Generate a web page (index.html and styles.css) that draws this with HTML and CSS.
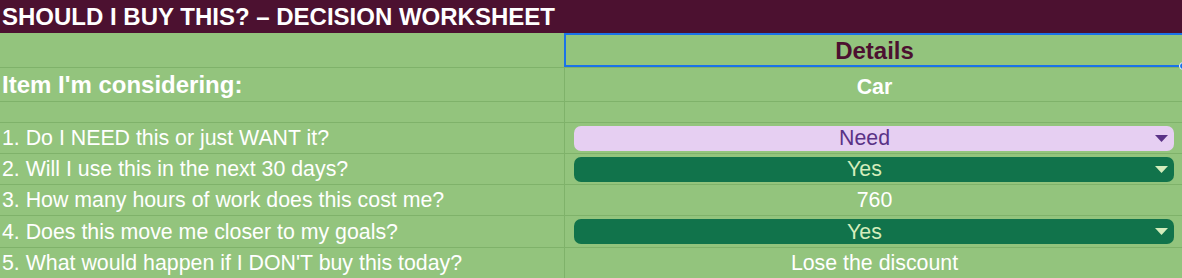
FILE: index.html
```html
<!DOCTYPE html>
<html lang="en">
<head>
<meta charset="utf-8">
<title>Should I buy this? – Decision worksheet</title>
<link rel="stylesheet" href="styles.css">
</head>
<body>
<div class="sheet">
  <div class="title">SHOULD I BUY THIS? – DECISION WORKSHEET</div>

  <div class="cell a"></div>
  <div class="cell b head">Details</div>

  <div class="cell a label-big">Item I'm considering:</div>
  <div class="cell b item">Car</div>

  <div class="cell a short"></div>
  <div class="cell b short"></div>

  <div class="cell a q">1. Do I NEED this or just WANT it?</div>
  <div class="cell b chip-cell">
    <div class="chip chip-need"><span class="chip-label">Need</span><svg class="arrow" width="13" height="7" viewBox="0 0 13 7"><polygon points="0,0 13,0 6.5,7"/></svg></div>
  </div>

  <div class="cell a q">2. Will I use this in the next 30 days?</div>
  <div class="cell b chip-cell">
    <div class="chip chip-yes"><span class="chip-label">Yes</span><svg class="arrow" width="13" height="7" viewBox="0 0 13 7"><polygon points="0,0 13,0 6.5,7"/></svg></div>
  </div>

  <div class="cell a q">3. How many hours of work does this cost me?</div>
  <div class="cell b val">760</div>

  <div class="cell a q tall">4. Does this move me closer to my goals?</div>
  <div class="cell b chip-cell tall">
    <div class="chip chip-yes"><span class="chip-label">Yes</span><svg class="arrow" width="13" height="7" viewBox="0 0 13 7"><polygon points="0,0 13,0 6.5,7"/></svg></div>
  </div>

  <div class="cell a q">5. What would happen if I DON'T buy this today?</div>
  <div class="cell b val">Lose the discount</div>

  <div class="selection"><span class="handle"></span></div>
</div>
</body>
</html>
```

FILE: styles.css
```css
html, body {
  margin: 0;
  padding: 0;
  background: #93c47d;
}
body {
  width: 1182px;
  height: 278px;
  overflow: hidden;
  font-family: "Liberation Sans", Arial, sans-serif;
  color: #ffffff;
}
.sheet {
  position: relative;
  display: grid;
  grid-template-columns: 565px 619px;
  grid-template-rows: 33px 35px 34px 21px 31px 31px 31px 32px 31px;
  width: 1184px;
  background: #93c47d;
}
.title {
  grid-column: 1 / 3;
  background: #4c1130;
  color: #ffffff;
  font-weight: bold;
  font-size: 24px;
  display: flex;
  align-items: flex-end;
  padding: 0 0 2px 2px;
  white-space: nowrap;
}
.cell {
  border-bottom: 1px solid #7fb26a;
  display: flex;
  align-items: flex-end;
  white-space: nowrap;
  min-width: 0;
  overflow: hidden;
}
.cell.a {
  border-right: 1px solid #7fb26a;
  padding-left: 2px;
}
.cell.b {
  justify-content: center;
}
.head {
  color: #4c1130;
  font-weight: bold;
  font-size: 24px;
  padding-bottom: 2px;
}
.label-big {
  font-weight: bold;
  font-size: 24px;
  padding-bottom: 2px;
}
.item {
  font-weight: bold;
  font-size: 21.33px;
  padding-bottom: 1px;
}
.q, .val {
  font-size: 21.33px;
  padding-bottom: 2px;
}
.chip-cell {
  align-items: center;
  padding: 0 10px 0 9px;
}
.chip {
  flex: 1;
  height: 25px;
  box-sizing: border-box;
  border-radius: 7px;
  display: flex;
  align-items: center;
  padding: 1px 6px 0 0;
  font-size: 21.33px;
}
.chip-label {
  flex: 1;
  text-align: center;
}
.arrow {
  display: block;
  flex: none;
  margin-top: -1px;
}
.chip-need {
  background: #e6cff2;
  color: #5a3286;
}
.chip-need .arrow { fill: #5a3286; }
.chip-yes {
  background: #11734b;
  color: #d4edbc;
}
.chip-yes .arrow { fill: #d4edbc; }
.selection {
  position: absolute;
  left: 564px;
  top: 33px;
  width: 640px;
  height: 34px;
  box-sizing: border-box;
  border: 2px solid #1a73e8;
}
.handle {
  position: absolute;
  left: 613px;
  bottom: -5px;
  width: 6px;
  height: 6px;
  border-radius: 50%;
  background: #1a73e8;
  border: 1px solid #ffffff;
}
```
